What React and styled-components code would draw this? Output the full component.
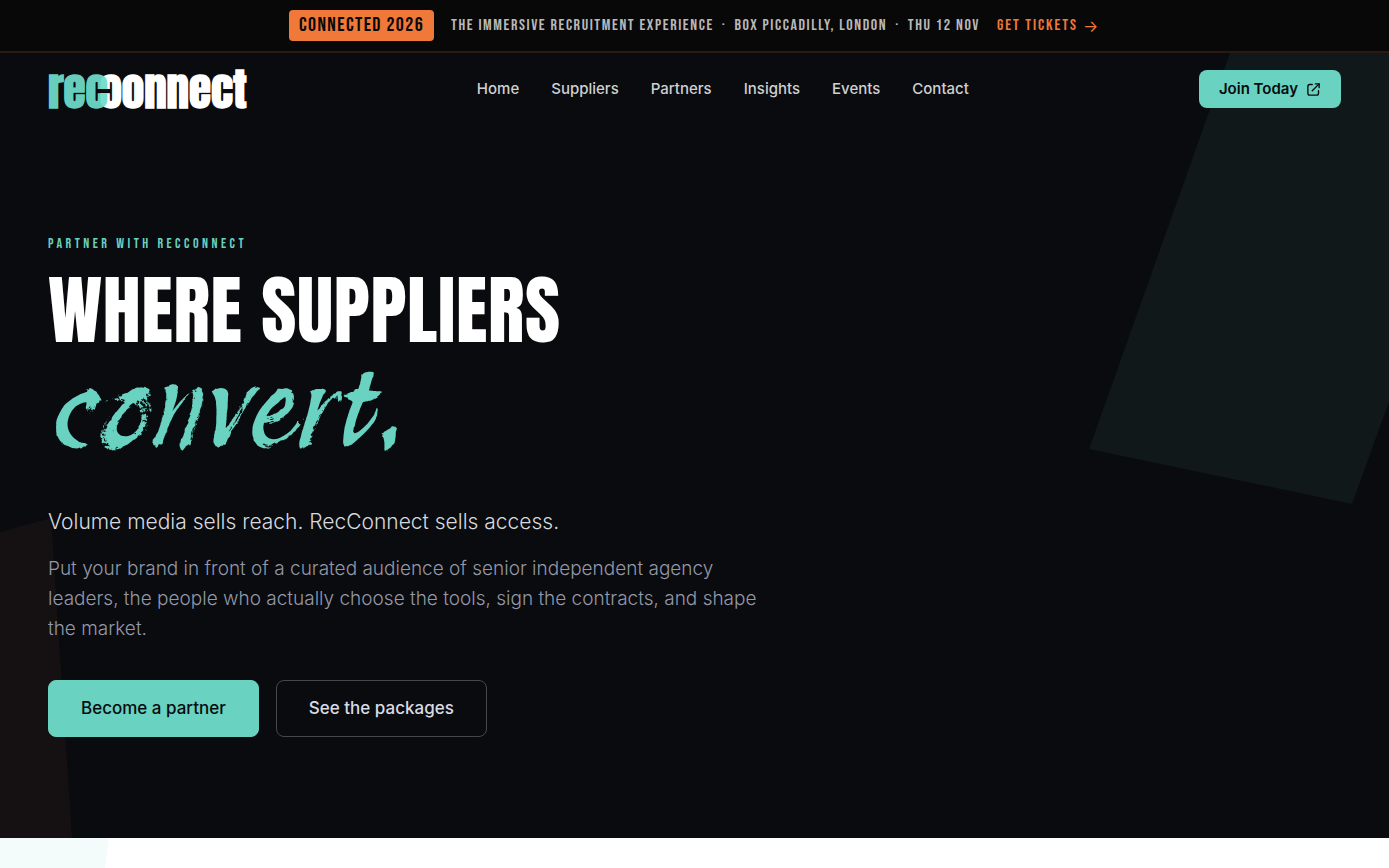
import React from 'react';
import styled, { createGlobalStyle } from 'styled-components';

const links = ['Home', 'Suppliers', 'Partners', 'Insights', 'Events', 'Contact'];

const App = () => (
  <>
    <GlobalStyle />
    <Banner href="#tickets">
      <Badge>Connected 2026</Badge>
      <BannerText>
        <span>The immersive recruitment experience</span>
        <span>·</span>
        <span>Box Piccadilly, London</span>
        <span>·</span>
        <span>Thu 12 Nov</span>
      </BannerText>
      <Tickets>Get tickets <Arrow>→</Arrow></Tickets>
    </Banner>
    <Hero>
      <Shapes viewBox="0 0 1389 785" preserveAspectRatio="xMaxYMin slice" aria-hidden="true">
        <polygon points="1230,0 1389,0 1389,349 1352,451 1089,396" fill="#111819" />
        <polygon points="0,479 51,465 72,785 0,785" fill="#151112" />
      </Shapes>
      <Header>
        <Logo href="#home" aria-label="recconnect">
          <LogoStart>rec</LogoStart>
          <LogoFlip>c</LogoFlip>
          <span>onnect</span>
        </Logo>
        <Nav>
          {links.map((link) => (
            <NavLink key={link} href={`#${link.toLowerCase()}`}>{link}</NavLink>
          ))}
        </Nav>
        <JoinLink href="#join">
          Join Today
          <ExternalIcon />
        </JoinLink>
      </Header>
      <Content>
        <Eyebrow>Partner with RecConnect</Eyebrow>
        <Title>
          Where suppliers
          <Script>convert.</Script>
        </Title>
        <Lead>Volume media sells reach. RecConnect sells access.</Lead>
        <Body>
          Put your brand in front of a curated audience of senior independent agency
          leaders, the people who actually choose the tools, sign the contracts, and shape
          the market.
        </Body>
        <Actions>
          <Button href="#partner" $primary>Become a partner</Button>
          <Button href="#packages">See the packages</Button>
        </Actions>
      </Content>
    </Hero>
    <NextSection>
      <NextShape viewBox="0 0 109 30" aria-hidden="true">
        <polygon points="0,0 109,0 105,30 0,30" fill="#f3fcfb" />
      </NextShape>
    </NextSection>
  </>
);

const ExternalIcon = () => (
  <svg width="15" height="15" viewBox="0 0 24 24" fill="none" stroke="currentColor" strokeWidth="2.2" strokeLinecap="round" strokeLinejoin="round" aria-hidden="true">
    <path d="M10 4H6a3 3 0 0 0-3 3v11a3 3 0 0 0 3 3h11a3 3 0 0 0 3-3v-4" />
    <path d="M15 3h6v6" />
    <path d="M10 14 21 3" />
  </svg>
);

const GlobalStyle = createGlobalStyle`
  * {
    box-sizing: border-box;
  }
  body {
    margin: 0;
    background: #ffffff;
    font-family: 'Inter', sans-serif;
    font-size: 17px;
  }
  a {
    color: inherit;
    text-decoration: none;
  }
`;
const Banner = styled.a`
  display: flex;
  flex-wrap: wrap;
  justify-content: center;
  align-items: center;
  gap: 17px;
  padding: 10px 24px;
  border-bottom: 2px solid #2a1a12;
  background: #080808;
  font-family: 'Bebas Neue', 'Anton', sans-serif;
  font-size: 16px;
  line-height: 20px;
  letter-spacing: 0.1em;
  text-transform: uppercase;
`;
const Badge = styled.span`
  padding: 4px 10px;
  border-radius: 4px;
  background: #f07838;
  color: #080808;
  font-size: 20px;
  line-height: 23px;
  letter-spacing: 0.07em;
`;
const BannerText = styled.span`
  display: flex;
  gap: 8px;
  color: #b9b9b9;
`;
const Tickets = styled.span`
  display: flex;
  gap: 5px;
  color: #f07838;
  letter-spacing: 0.12em;
`;
const Arrow = styled.span`
  font-family: 'Inter', sans-serif;
`;
const Hero = styled.section`
  position: relative;
  overflow: hidden;
  background: #090b0e;
  color: #ffffff;
`;
const Shapes = styled.svg`
  position: absolute;
  inset: 0;
  width: 100%;
  height: 100%;
`;
const Header = styled.header`
  position: relative;
  display: flex;
  flex-wrap: wrap;
  justify-content: space-between;
  align-items: center;
  padding: 12px 48px;
`;
const Logo = styled.a`
  display: flex;
  font-family: 'Anton', sans-serif;
  font-size: 45px;
  font-weight: 700;
  line-height: 48px;
`;
const LogoStart = styled.span`
  position: relative;
  z-index: 1;
  color: rgba(110, 220, 201, 0.95);
`;
const LogoFlip = styled.span`
  margin-left: -8px;
  transform: scaleX(-1);
`;
const Nav = styled.nav`
  display: flex;
  flex-wrap: wrap;
  gap: 32px;
`;
const NavLink = styled.a`
  color: #cfd0d1;
  font-size: 15px;
  font-weight: 500;
  line-height: 20px;
`;
const JoinLink = styled.a`
  display: flex;
  align-items: center;
  gap: 8px;
  padding: 9px 20px;
  border-radius: 8px;
  background: #69d2c0;
  color: #080c0e;
  font-size: 15px;
  font-weight: 600;
  line-height: 20px;
`;
const Content = styled.div`
  position: relative;
  max-width: 816px;
  padding: 109px 48px 101px;
`;
const Eyebrow = styled.p`
  margin: 0 0 17px;
  color: #69d2c0;
  font-family: 'Bebas Neue', 'Anton', sans-serif;
  font-size: 14px;
  line-height: 20px;
  letter-spacing: 0.25em;
  text-transform: uppercase;
`;
const Title = styled.h1`
  margin: 0 0 34px;
  font-family: 'Anton', sans-serif;
  font-size: 76px;
  font-weight: 400;
  line-height: 78px;
  letter-spacing: 0.01em;
  text-transform: uppercase;
`;
const Script = styled.span`
  display: block;
  color: #69d2c0;
  font-family: 'Protest Revolution', 'Kaushan Script', cursive;
  font-size: 100px;
  font-style: italic;
  line-height: 124px;
  letter-spacing: 0;
  text-transform: none;
`;
const Lead = styled.p`
  margin: 0 0 17px;
  color: #d6dade;
  font-size: 21px;
  font-weight: 300;
  line-height: 30px;
`;
const Body = styled.p`
  margin: 0 0 36px;
  color: #9498a8;
  font-size: 19px;
  font-weight: 300;
  line-height: 30px;
`;
const Actions = styled.div`
  display: flex;
  flex-wrap: wrap;
  gap: 17px;
`;
const Button = styled.a`
  padding: 17px 32px;
  border: 1px solid ${(props) => (props.$primary ? '#69d2c0' : '#45474f')};
  border-radius: 8px;
  background: ${(props) => (props.$primary ? '#69d2c0' : 'transparent')};
  color: ${(props) => (props.$primary ? '#080c0e' : '#d9dbe3')};
  font-size: 17px;
  font-weight: 500;
  line-height: 21px;
`;
const NextSection = styled.section`
  background: #ffffff;
`;
const NextShape = styled.svg`
  display: block;
  width: 109px;
  height: 30px;
`;

export default App;
